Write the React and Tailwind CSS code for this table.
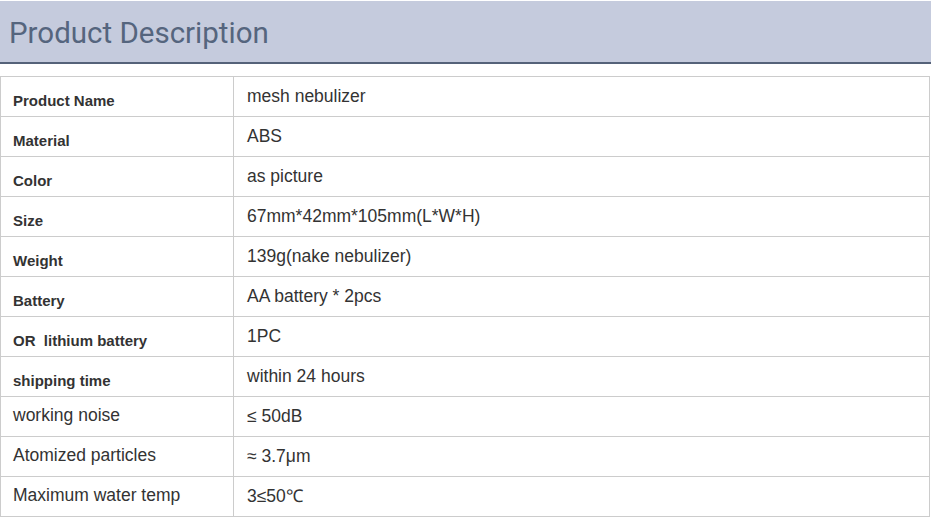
import React from "react";

const rows = [
  ["Product Name", "mesh nebulizer", true],
  ["Material", "ABS", true],
  ["Color", "as picture", true],
  ["Size", "67mm*42mm*105mm(L*W*H)", true],
  ["Weight", "139g(nake nebulizer)", true],
  ["Battery", "AA battery * 2pcs", true],
  ["OR\u00a0 lithium battery", "1PC", true],
  ["shipping time", "within 24 hours", true],
  ["working noise", "≤ 50dB", false],
  ["Atomized particles", "≈ 3.7μm", false],
  ["Maximum water temp", "3≤50℃", false],
];

export default function App() {
  return (
    <div className="w-[931px] h-[517px] bg-white overflow-hidden" style={{ fontFamily: '"Liberation Sans", Arial, sans-serif' }}>
      <div className="mt-[1px] h-[63px] bg-[#c5cbdd] border-b-2 border-[#556279] flex items-center pl-[9px]">
        <span className="text-[29.5px] text-[#55657e] leading-none pt-[5px]" style={{ fontFamily: 'Roboto, "Liberation Sans", sans-serif' }}>
          Product Description
        </span>
      </div>
      <div className="mt-[12px] w-[930px] border border-[#cccccc] border-b-0">
        {rows.map(([label, value, bold], i) => (
          <div key={i} className="flex h-[40px] border-b border-[#cccccc]">
            <div className={`w-[233px] shrink-0 border-r border-[#cccccc] pl-[12px] flex items-center text-[#333333] ${bold ? "text-[15px] font-bold pt-[9px]" : "text-[17.5px] pb-[2px]"}`}>
              {label}
            </div>
            <div className="flex-1 pl-[13px] flex items-center text-[17.5px] text-[#333333]">
              {value}
            </div>
          </div>
        ))}
      </div>
    </div>
  );
}
